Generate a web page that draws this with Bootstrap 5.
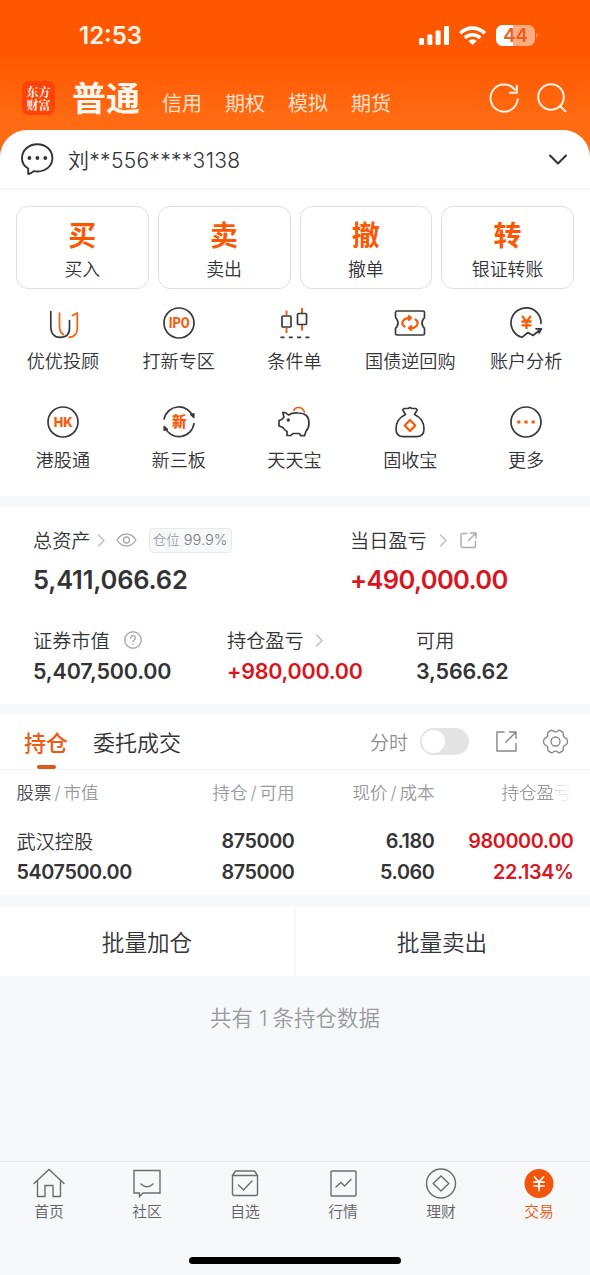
<!DOCTYPE html>
<html lang="zh-CN">
<head>
<meta charset="utf-8">
<meta name="viewport" content="width=device-width, initial-scale=1">
<title>交易</title>
<link rel="stylesheet" href="https://cdn.jsdelivr.net/npm/bootstrap@5.3.0/dist/css/bootstrap.min.css">
<style>
:root{--brand:#fb5806;--ink:#333436;--rise:#d9161d;--mute:#999a9c;--strip:#f7f8fa}
body{font-family:Inter,"Noto Sans CJK SC",sans-serif;color:var(--ink);background:#f7f8fa;height:1275px;overflow:hidden;line-height:1;font-weight:400}
svg{display:block;flex:none;fill:none;stroke-linecap:round;stroke-linejoin:round;overflow:visible}
.top-area{height:170px;background:linear-gradient(#ff5600 0,#ff5700 54px,#ff6b13 120px,#ff6d16 170px)}
.status-row{height:70px;padding:0 52px 0 79px}
.clock{font-size:24px;font-weight:600;color:#fff5e8;padding-top:1px}
.channel-row{height:60px;padding:0 23px 4px 22px;color:#fff6ee}
.brand-logo{width:33px;height:34px;border-radius:7px;background:#fc4309;font:700 12px/13px "Noto Serif CJK SC","Noto Sans CJK SC",sans-serif;padding:4px 4px 0 4.5px}
.channel-main{font-size:34px;font-weight:700;line-height:40px;margin-left:17px;width:68px;white-space:nowrap;padding-top:2px}
.channel-link{font-size:20px;line-height:24px;color:#ffe0cb;margin-left:23px;padding-top:12px;font-weight:400;width:40px;white-space:nowrap}
.channel-main+.channel-link{margin-left:22px}
.sheet{margin-top:-40px;border-radius:27px 27px 0 0;background:#fff}
.account-row{height:60px;padding:0 22px 0 21px;border-bottom:2px solid #f5f6f7}
.account-name{font-size:21px;margin-left:15px;font-weight:350;letter-spacing:.3px;padding-top:3px}
.trade-row{padding:16px 16px 0;gap:9px}
.trade-box{height:83px;border:1px solid #dedfe1;border-radius:12px;padding-top:13px}
.trade-box b{display:block;font-size:28px;line-height:32px;color:var(--brand);font-weight:600}
.trade-box span{display:block;font-size:17.9px;line-height:24px;margin-top:6px;font-weight:350}
.tool-grid{display:grid;grid-template-columns:repeat(5,1fr);padding:16px 6px 0 5px;height:207px;grid-auto-rows:99px}
.tool-item svg{width:36px;height:36px;stroke:#38393c;stroke-width:1.7}
.tool-item span{font-size:18.1px;line-height:24px;margin-top:8px;white-space:nowrap;font-weight:350}
.tool-item svg .o{stroke:#fb5a0a}.f{fill:#fb5a0a;stroke:none}
.assets{height:197px;background:#fff;margin-top:11px;padding:20px 34px 0 33px}
.asset-line{display:grid;grid-template-columns:317px 1fr}
.asset-line.three{grid-template-columns:194px 189px 1fr;margin-top:32px}
.cap{height:26px;font-size:19.2px;font-weight:350;white-space:nowrap}
.cap>span:first-child{padding-top:3px}
.sum{font-size:25.5px;line-height:30px;font-weight:600;margin-top:12px;white-space:nowrap;letter-spacing:-.2px}
.sum.rise{letter-spacing:-.65px}
.three .sum{font-size:21.5px;line-height:26px;margin-top:5px;font-weight:600;letter-spacing:-.15px}
.three .sum.rise{letter-spacing:-.25px}
.rise{color:var(--rise)}
.pos-tag{height:25px;width:83px;border:1px solid #e8eaee;background:#f7f8fa;border-radius:4px;color:#7b7d82;font-size:14.6px;line-height:23px;margin-left:12px;text-align:center}
.pos-tag i{font-style:normal;color:#a1a3a8;font-size:13.5px}
.ic-line{stroke:#aaabad;stroke-width:1.4}
.ic-next{stroke:#bbbcbe;stroke-width:1.3}
.holdings{height:181px;background:#fff;margin-top:10px}
.tab-row{height:56px;border-bottom:1px solid #f1f2f4;padding:0 22px 0 24px;font-size:22px}
.tab-on{color:#ee5a12;font-weight:500;height:55px;line-height:58px}
.tab-on::after{content:"";position:absolute;left:12.5px;bottom:0;width:19px;height:4px;border-radius:2px;background:#d95a1e}
.tab-off{margin-left:25px;font-weight:350;padding-top:3px}
.minute{font-size:19px;color:#8c8d90;font-weight:350;padding-top:3px}
.switch-track{width:49px;height:27px;border-radius:14px;background:#e4e4e5;padding:2px;margin-left:12px}
.switch-track span{display:block;width:23px;height:23px;border-radius:50%;background:#fff}
.hold-grid{display:grid;grid-template-columns:137px 141px 140px 139px;padding:0 16px 0 16.5px;text-align:right}
.hold-grid>:nth-child(4n+1){text-align:left}
.hold-head{height:44px;line-height:45px;font-size:17.5px;color:var(--mute);font-weight:350}
.hold-head i{font-style:normal;padding:0 3px}
.hold-body{font-size:19.8px;font-weight:600;line-height:31px;padding-top:12px;letter-spacing:-.4px}
.fade-end{background:linear-gradient(90deg,#999a9c 0,#999a9c 72%,#e2e2e4 80%,#f4f4f5 100%);-webkit-background-clip:text;background-clip:text;color:transparent;margin-right:2px}
.stock-name{font-size:19.2px;font-weight:350;letter-spacing:0;line-height:33px;height:31px}
.batch-row{margin-top:12px;height:69px;background:#fff;font-size:22.6px;line-height:24px;font-weight:350;padding-right:2px}
.batch-row>div{padding-top:3px}
.batch-row>div+div{border-left:2px solid #f5f6f8}
.summary{height:185px;padding-top:29px;font-size:21.5px;line-height:26px;color:#999a9d;font-weight:350}
.summary span{padding:0 5px 0 6px}
.tab-bar{height:114px;border-top:1px solid #e6e8eb;padding:5px 2px 0 0}
.tab-bar svg{width:32px;height:32px;stroke:#6c6d70;stroke-width:1.4;stroke-linejoin:miter}
.tab-bar a{font-size:14.8px;color:#606164;text-decoration:none;font-weight:350}
.tab-bar a span{margin-top:3px;line-height:20px}
.tab-bar a.on{color:#f0560f}
.home-bar{width:212px;height:7px;border-radius:4px;background:#000;margin:-18px auto 0}
</style>
</head>
<body>
<header class="top-area">
  <div class="status-row d-flex align-items-center">
    <span class="clock">12:53</span>
    <svg class="ms-auto" width="30" height="19" viewBox="0 0 30 19"><g fill="#fff"><rect y="12" width="5" height="7" rx="1.2"/><rect x="8.3" y="8.5" width="5" height="10.5" rx="1.2"/><rect x="16.6" y="4.5" width="5" height="14.5" rx="1.2"/><rect x="25" width="5" height="19" rx="1.2"/></g></svg>
    <svg style="margin-left:10px" width="27" height="19" viewBox="0 0 27 19"><g stroke="#fff" stroke-width="3.6" stroke-linecap="butt"><path d="M1.2 7.2a17.4 17.4 0 0 1 24.6 0"/><path d="M5.8 11.9a11 11 0 0 1 15.4 0"/></g><path d="M13.5 19 9.2 14.9a6.1 6.1 0 0 1 8.6 0z" fill="#fff"/></svg>
    <svg style="margin-left:10px" width="42" height="21" viewBox="0 0 42 21"><rect width="39" height="21" rx="6.5" fill="#ffac80"/><path d="M6.500 0H17V21H6.500A6.500 6.500 0 0 1 0 14.500V6.500A6.500 6.500 0 0 1 6.500 0z" fill="#fff"/><path d="M40.500 7.500q2 3 0 6z" fill="#ffac80"/><text x="19.500" y="17" text-anchor="middle" font-size="18.500" font-weight="600" fill="#e9601c">44</text></svg>
  </div>
  <div class="channel-row d-flex align-items-center">
    <div class="brand-logo">东方财富</div>
    <div class="channel-main">普通</div>
    <div class="channel-link">信用</div><div class="channel-link">期权</div><div class="channel-link">模拟</div><div class="channel-link">期货</div>
    <svg class="ms-auto" width="30" height="30" viewBox="0 0 30 30" stroke="#fff4e8" stroke-width="2"><path d="M28.700 15.500A13.600 13.600 0 1 1 26.200 7.200M27.800 2V9.800H20" stroke-linecap="butt" stroke-linejoin="miter"/></svg>
    <svg style="margin-left:18px" width="30" height="30" viewBox="0 0 30 30" stroke="#fff4e8" stroke-width="2"><circle cx="14" cy="14" r="12.800"/><path d="m23 23 5.500 5.500"/></svg>
  </div>
</header>

<main>
  <section class="sheet">
    <div class="account-row d-flex align-items-center">
      <svg width="32" height="32" viewBox="0 0 32 32" stroke="#333436" stroke-width="1.900"><path d="M7.200 31V25.500C3 23 1 19.300 1 15.200 1 7.300 7.500 1.200 16.300 1.200S31.400 7.300 31.400 15 25 28.500 16.300 28.500q-2 0-3.600-.4Q10.500 30.400 7.200 31z"/><g fill="#333436" stroke="none"><circle cx="8.400" cy="15" r="1.900"/><circle cx="16.400" cy="15" r="1.900"/><circle cx="24.300" cy="15" r="1.900"/></g></svg>
      <span class="account-name">刘**556****3138</span>
      <svg class="ms-auto" width="19" height="11" viewBox="0 0 19 11" stroke="#333436" stroke-width="2.100"><path d="m1 1.500 8 8 8-8"/></svg>
    </div>
    <div class="trade-row d-flex text-center">
      <div class="trade-box flex-fill w-25"><b>买</b><span>买入</span></div>
      <div class="trade-box flex-fill w-25"><b>卖</b><span>卖出</span></div>
      <div class="trade-box flex-fill w-25"><b>撤</b><span>撤单</span></div>
      <div class="trade-box flex-fill w-25"><b>转</b><span>银证转账</span></div>
    </div>
    <div class="tool-grid">
      <div class="tool-item d-flex flex-column align-items-center"><svg viewBox="0 0 36 36"><path class="o" d="M14.500 8V21Q14.500 27.500 18.500 29.500M27.500 10.500 32.300 8V23Q32.300 32 24 32.300"/><path d="M5.800 6.500V21Q5.800 32.300 15.300 32.300T24.500 22.500V15.500"/></svg><span>优优投顾</span></div>
      <div class="tool-item d-flex flex-column align-items-center"><svg viewBox="0 0 36 36"><circle cx="18" cy="18" r="15"/><text class="f" x="18.200" y="23" text-anchor="middle" font-size="14" font-weight="800" font-family="Roboto,Inter" textLength="21" lengthAdjust="spacingAndGlyphs">IPO</text></svg><span>打新专区</span></div>
      <div class="tool-item d-flex flex-column align-items-center"><svg viewBox="0 0 36 36"><path class="o" stroke-width="2" stroke-linecap="butt" d="M10.500 5.500V10M10.500 23V28M26 3V8M26 20V25.500"/><rect x="6" y="11" width="9" height="11" rx="1"/><rect x="21.500" y="8.500" width="9" height="11" rx="1"/><path stroke-linecap="butt" stroke-dasharray="4 4.300" d="M4.500 32.300H34"/></svg><span>条件单</span></div>
      <div class="tool-item d-flex flex-column align-items-center"><svg viewBox="0 0 36 36"><path d="M5 6H31Q32.500 6 32.500 7.500V12Q32.500 13.500 31 14.300 29 18 31 21.700 32.500 22.500 32.500 24V28.500Q32.500 30 31 30H5Q3.500 30 3.500 28.500V24Q3.500 22.500 5 21.700 7 18 5 14.300 3.500 13.500 3.500 12V7.500Q3.500 6 5 6z"/><g class="o" stroke-width="2.200"><path d="M12.500 21.500C8.500 19 10.500 12.500 18.500 12.800M16.800 11 19 12.900 16.800 14.800M23.500 14.500C27.500 17 25.500 23.500 17.500 23.200M19.200 25 17 23.100 19.200 21.200"/></g></svg><span>国债逆回购</span></div>
      <div class="tool-item d-flex flex-column align-items-center"><svg viewBox="0 0 36 36"><path d="M33 18.500A15 15 0 1 0 14 32.300L20 27.500 25 30.500 33 24M28 23.800H33.500L31 28"/><path class="o" stroke-width="2.300" stroke-linecap="butt" d="m14 11 4.500 5.500 4.500-5.500M18.500 16.500V24M13.500 16.500H23.500M13.500 20.300H23.500"/></svg><span>账户分析</span></div>
      <div class="tool-item d-flex flex-column align-items-center"><svg viewBox="0 0 36 36"><circle cx="18" cy="18" r="15"/><text class="f" x="18.200" y="22.900" text-anchor="middle" font-size="13.500" font-weight="800" textLength="19" lengthAdjust="spacingAndGlyphs">HK</text></svg><span>港股通</span></div>
      <div class="tool-item d-flex flex-column align-items-center"><svg viewBox="0 0 36 36"><path d="M3 15A15.200 15.200 0 0 1 32 12.500M33 19.500A15.200 15.200 0 0 1 4 23.500"/><path d="m29.500 10.500 3.500 3V9.500zM6.500 25.300 3 22.300V26.300z" fill="#38393c" stroke-width="1.200"/><text class="f" x="18.200" y="23.200" text-anchor="middle" font-size="14.500" font-weight="900">新</text></svg><span>新三板</span></div>
      <div class="tool-item d-flex flex-column align-items-center"><svg viewBox="0 0 36 36"><path class="o" d="M18 6.500Q18.500 3.500 22.500 3.500T28.500 8"/><path d="M12.500 11Q10 8.200 6.800 8.500L8 13.200 5.800 15.500 3 16.500V22L7 23.500Q8 25.700 11 27.500V31.500H15L17 29.500H23.500L24.500 31.700H28.500L30 27.300Q33 24 33 19 33 9 22 9 16.500 8.500 12.500 11z"/><circle cx="12.300" cy="16" r="1.700" fill="#38393c" stroke="none"/></svg><span>天天宝</span></div>
      <div class="tool-item d-flex flex-column align-items-center"><svg viewBox="0 0 36 36"><path d="M13.500 10.500 10.800 6 12 4.500H16L18 3.500 20 4.500H24L25.200 6 22.500 10.500C29 13.500 32 19 32 25Q32 32.700 24.500 32.700H11.500Q4 32.700 4 25C4 19 7 13.500 13.500 10.500z"/><path class="o" stroke-width="2.300" d="m18 16 5.300 5.500L18 27 12.700 21.500z"/></svg><span>固收宝</span></div>
      <div class="tool-item d-flex flex-column align-items-center"><svg viewBox="0 0 36 36"><circle cx="18" cy="18" r="15"/><g class="f"><circle cx="10.800" cy="18" r="1.800"/><circle cx="18" cy="18" r="1.800"/><circle cx="25.200" cy="18" r="1.800"/></g></svg><span>更多</span></div>
    </div>
  </section>

  <section class="assets">
    <div class="asset-line">
      <div>
        <div class="cap d-flex align-items-center"><span>总资产</span>
          <svg class="ic-next" style="margin-left:6px" width="8" height="11" viewBox="0 0 8 11"><path d="m1.500 0 5.500 5.500L1.500 11"/></svg>
          <svg class="ic-line" style="margin-left:11px" width="21" height="14" viewBox="0 0 21 14"><path d="M1 7C6-1 15-1 20 7 15 15 6 15 1 7z"/><circle cx="10.500" cy="7" r="3"/></svg>
          <span class="pos-tag"><i>仓位</i> 99.9%</span></div>
        <div class="sum">5,411,066.62</div>
      </div>
      <div>
        <div class="cap d-flex align-items-center"><span>当日盈亏</span>
          <svg class="ic-next" style="margin-left:12px" width="8" height="11" viewBox="0 0 8 11"><path d="m1.500 0 5.500 5.500L1.500 11"/></svg>
          <svg class="ic-line" style="margin-left:13px" width="17" height="17" viewBox="0 0 17 17"><path d="M7 1.500H3Q1 1.500 1 3.500V13.500Q1 15.500 3 15.500H13.500Q15.500 15.500 15.500 13.500V9.500M10.500 1H16V6M15.500 1.500 8.500 8.500"/></svg></div>
        <div class="sum rise">+490,000.00</div>
      </div>
    </div>
    <div class="asset-line three">
      <div><div class="cap d-flex align-items-center"><span>证券市值</span>
        <svg class="ic-line" style="margin-left:14px" width="18" height="18" viewBox="0 0 18 18"><circle cx="9" cy="9" r="8.200"/><path d="M6.700 7.200Q6.800 4.800 9.100 4.800T11.400 7Q11.400 8.100 10 9 9 9.600 9 10.700M9 13V13.200"/></svg></div>
        <div class="sum">5,407,500.00</div></div>
      <div><div class="cap d-flex align-items-center"><span>持仓盈亏</span>
        <svg class="ic-next" style="margin-left:11px" width="8" height="11" viewBox="0 0 8 11"><path d="m1.500 0 5.500 5.500L1.500 11"/></svg></div>
        <div class="sum rise">+980,000.00</div></div>
      <div><div class="cap d-flex align-items-center"><span>可用</span></div><div class="sum">3,566.62</div></div>
    </div>
  </section>

  <section class="holdings">
    <div class="tab-row d-flex align-items-center">
      <div class="tab-on position-relative">持仓</div>
      <div class="tab-off">委托成交</div>
      <div class="minute ms-auto">分时</div>
      <div class="switch-track"><span></span></div>
      <svg style="margin-left:27px" width="21" height="21" viewBox="0 0 22 22" stroke="#858689" stroke-width="1.500" stroke-linejoin="miter"><path d="M8.500 1H1V21H21V13M14 1H21V7.500M21 1 10.500 11.500"/></svg>
      <svg style="margin-left:26px" width="25" height="25" viewBox="0 0 26 26" stroke="#858689" stroke-width="1.400"><circle cx="13" cy="13" r="4.700"/><path d="M8.500 1.500Q9.500 1 10.300 1.800 13 4.200 15.700 1.800 16.500 1 17.500 1.500L20.200 3Q21.200 3.600 21 4.700 20.500 8.200 23.800 9.500 25.500 10.500 25.500 13T23.800 16.500Q20.500 17.800 21 21.300 21.200 22.400 20.200 23L17.500 24.500Q16.500 25 15.700 24.200 13 21.800 10.300 24.200 9.500 25 8.500 24.500L5.800 23Q4.800 22.400 5 21.300 5.500 17.800 2.200 16.500 .5 15.500 .5 13T2.200 9.500Q5.500 8.200 5 4.700 4.800 3.600 5.800 3z"/></svg>
    </div>
    <div class="hold-grid hold-head">
      <div><span style="color:#4b4c4f">股票</span><i>/</i>市值</div><div>持仓<i>/</i>可用</div><div>现价<i>/</i>成本</div><div><span class="fade-end">持仓盈亏</span></div>
    </div>
    <div class="hold-grid hold-body">
      <div class="stock-name">武汉控股</div><div>875000</div><div>6.180</div><div class="rise">980000.00</div>
      <div>5407500.00</div><div>875000</div><div>5.060</div><div class="rise">22.134%</div>
    </div>
  </section>

  <section class="batch-row d-flex text-center">
    <div class="w-50 d-flex align-items-center justify-content-center">批量加仓</div>
    <div class="w-50 d-flex align-items-center justify-content-center">批量卖出</div>
  </section>
  <div class="summary text-center">共有<span>1</span>条持仓数据</div>
</main>

<nav class="tab-bar d-flex text-center">
  <a class="w-25 d-flex flex-column align-items-center"><svg viewBox="0 0 32 32"><path d="M1 16.500 16 2.500 31 16.500M4.500 13.500V29.500H12V18.500H20V29.500H27.500V13.500"/></svg><span>首页</span></a>
  <a class="w-25 d-flex flex-column align-items-center"><svg viewBox="0 0 32 32"><path d="M3 3.500H29V26H12L8.500 29.500V26H3zM10 17Q16 22.500 22 17"/></svg><span>社区</span></a>
  <a class="w-25 d-flex flex-column align-items-center"><svg viewBox="0 0 32 32"><path d="M3.500 8.500 6.500 4H25.500L28.500 8.500V26.500Q28.500 28.500 26.500 28.500H5.500Q3.500 28.500 3.500 26.500V8.500H28.500M9.500 18 14.500 23 23 14"/></svg><span>自选</span></a>
  <a class="w-25 d-flex flex-column align-items-center"><svg viewBox="0 0 32 32"><rect x="4" y="4" width="25" height="25" rx="1"/><path d="m9 20 5-4.500 3.500 3.500 6.500-6.500"/></svg><span>行情</span></a>
  <a class="w-25 d-flex flex-column align-items-center"><svg viewBox="0 0 32 32"><circle cx="16" cy="16.500" r="14.500"/><path d="m16 9 7.800 7.500-7.800 7.500-7.800-7.500z"/></svg><span>理财</span></a>
  <a class="w-25 d-flex flex-column align-items-center on"><svg viewBox="0 0 32 32"><circle cx="16" cy="16.500" r="14.500" fill="#f2560c" stroke="none"/><path stroke="#fff" stroke-width="1.700" d="m11.500 10 4.500 5 4.500-5M16 15V23.500M11 15.200H21M11 19H21"/></svg><span>交易</span></a>
</nav>
<div class="home-bar"></div>
<script src="https://cdn.jsdelivr.net/npm/bootstrap@5.3.0/dist/js/bootstrap.bundle.min.js"></script>
</body>
</html>
